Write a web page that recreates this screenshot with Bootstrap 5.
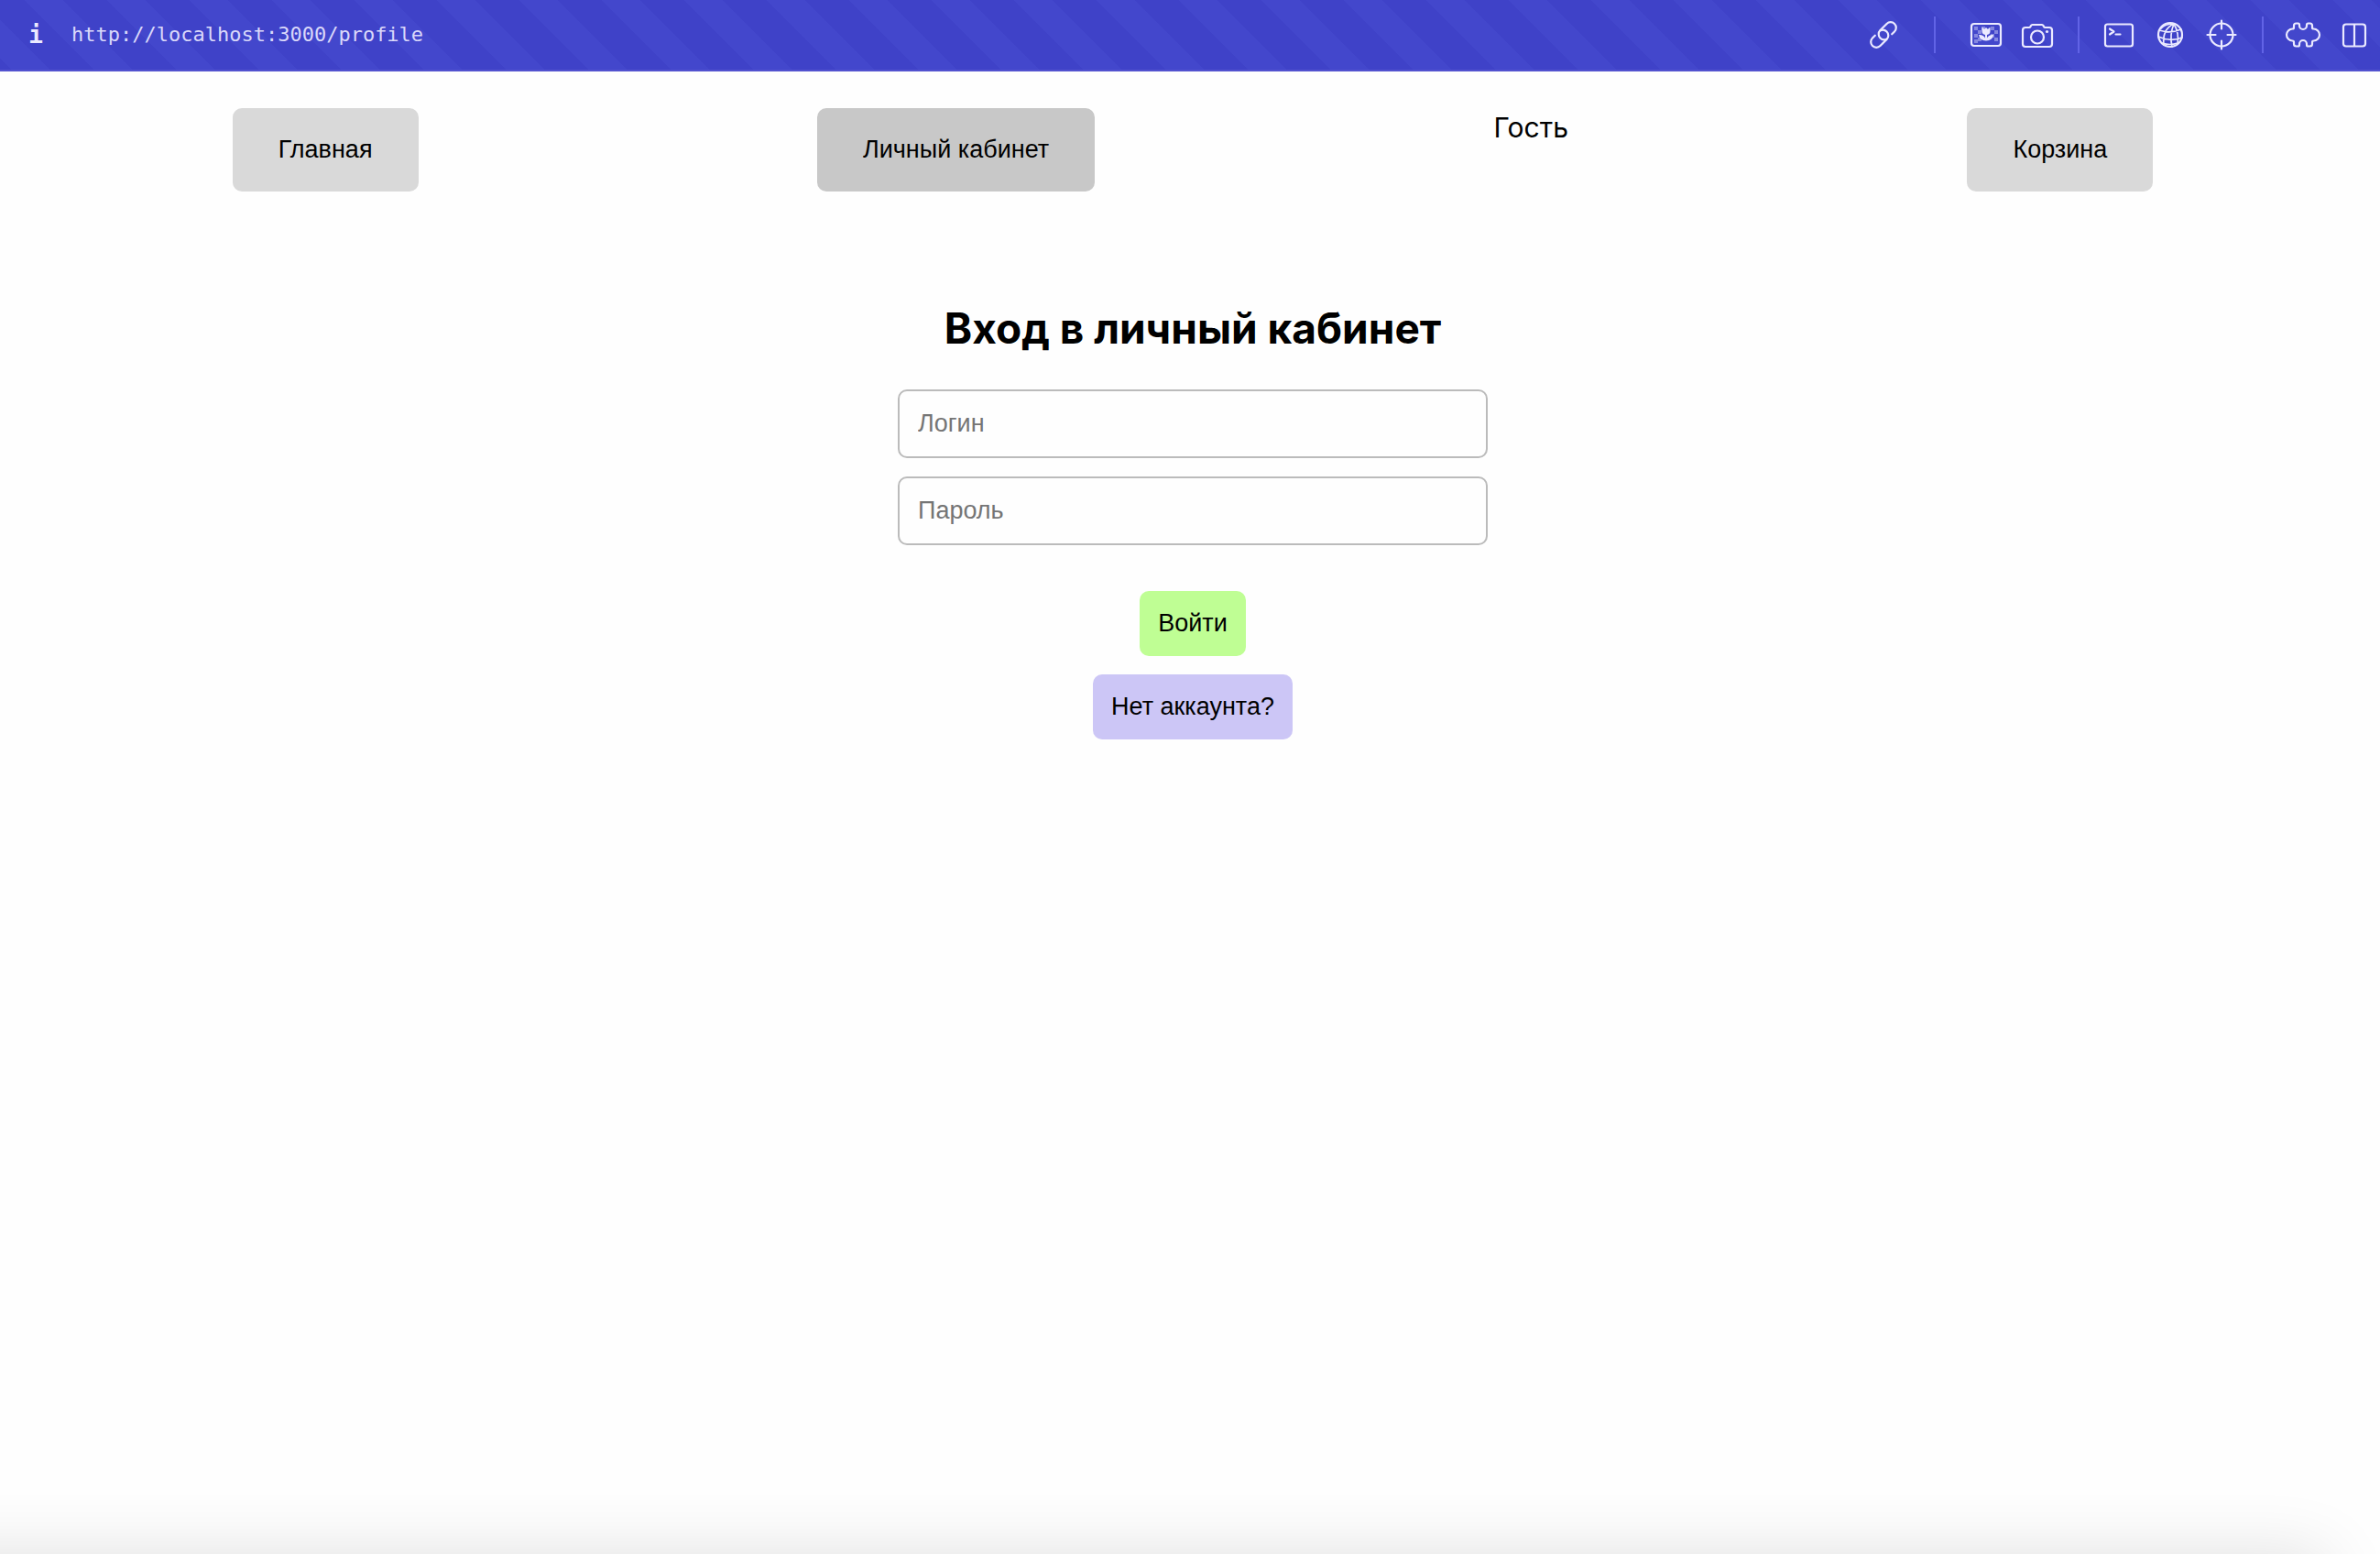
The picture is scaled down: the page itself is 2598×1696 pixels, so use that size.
<!DOCTYPE html>
<html lang="ru">
<head>
<meta charset="utf-8">
<meta name="viewport" content="width=device-width, initial-scale=1">
<title>Личный кабинет</title>
<link href="https://cdn.jsdelivr.net/npm/bootstrap@5.3.0/dist/css/bootstrap.min.css" rel="stylesheet">
<style>
  body { background: #fefefe; color: #000; font-family: Inter, "Liberation Sans", sans-serif; font-size: 30px; line-height: 38px; }
  .page-shell { overflow: hidden; }
  .dev-bar {
    height: 78px; border-bottom: 2px solid #5252cf; background-color: #3f42c8;
    background-image: linear-gradient(45deg, transparent 15%, #4347cc 15%, #4347cc 38%, transparent 38%, transparent 65%, #4347cc 65%, #4347cc 88%, transparent 88%);
    background-size: 90px 90px; background-origin: border-box;
    color: #ebeaff; font-family: "DejaVu Sans Mono", monospace; font-size: 22px;
  }
  .info-btn { width: 78px; font-weight: 700; font-size: 26px; font-family: "DejaVu Sans Mono", monospace; color: inherit; background: none; border: 0; padding: 0; }
  .url-link { color: #dad8fa; text-decoration: none; }
  .tool-btn { width: 56px; height: 56px; padding: 0; border: 0; background: none; color: inherit; display: flex; align-items: center; justify-content: center; }
  .tool-btn svg { width: 40px; height: 40px; fill: none; stroke: currentColor; stroke-width: 2.2; stroke-linecap: round; stroke-linejoin: round; }
  .tool-rule { width: 2px; height: 40px; background: #6163e6; margin: 0 15px 0 16px; }
  .tool-rule-wide { margin: 0 27px; }
  .site-area { padding: 40px 30px 0 36px; }
  .site-btn { border: 0; border-radius: 10px; color: #000; font-family: "Liberation Sans", Arial, sans-serif; font-size: 27px; line-height: 31px; padding: 20px; }
  .menu-btn { background: #d9d9d9; padding: 30px 50px; }
  .menu-btn.current { background: #c8c8c8; }
  .enter-btn { background: #bffe94; }
  .signup-btn { background: #ccc6f6; }
  .guest-name { padding-top: 2px; }
  .login-form { margin-top: 120px; }
  .login-title { font-size: 46px; line-height: 58px; font-weight: 700; margin: 0 0 38px; }
  .fields { width: 644px; max-width: 100%; gap: 20px; margin-bottom: 50px; }
  .fields input { border: 2px solid #bbb; border-radius: 10px; background: transparent; padding: 20px; height: 75px; font-family: "Liberation Sans", Arial, sans-serif; font-size: 27px; line-height: 31px; color: #000; }
  .fields input::placeholder { color: #757575; }
  .actions { gap: 20px; }
  .bottom-shade { height: 100px; margin: auto 58px -100px -100px; box-shadow: 0 0 72px rgba(0,0,0,.12); }
</style>
<script src="https://cdn.jsdelivr.net/npm/bootstrap@5.3.0/dist/js/bootstrap.bundle.min.js"></script>
</head>
<body>
<div class="page-shell d-flex flex-column min-vh-100">
  <header class="dev-bar d-flex align-items-center">
    <button class="info-btn" type="button" aria-label="Info">i</button>
    <a class="url-link" href="http://localhost:3000/profile">http://localhost:3000/profile</a>
    <div class="d-flex align-items-center ms-auto">
      <button class="tool-btn" type="button" aria-label="Link"><svg viewBox="-20 -20 40 40"><g transform="rotate(-45)"><path d="M7 6h4a6 6 0 0 0 0-12H1a6 6 0 0 0-6 6 6 6 0 0 0 4 5.700"/><path d="M-7-6h-4a6 6 0 0 0 0 12H-1a6 6 0 0 0 6-6 6 6 0 0 0-4-5.700"/></g></svg></button>
      <div class="tool-rule tool-rule-wide"></div>
      <button class="tool-btn" type="button" aria-label="Image"><svg viewBox="-20 -20 40 40"><g fill="currentColor" stroke="none"><path opacity=".4" d="M-13-9h4v4h-4zM-5-9h4v4h-4zM5-9h4v4h-4zM-9-5h4v4h-4zM9-5h4v4h-4zM-13-1h4v4h-4zM5-1h4v4h-4zM-9 3h4v4h-4zM9 3h4v4h-4zM-13 5h4v4h-4z"/><path d="M-4.500-8q1.500 0 2.500 2l2-2 2 2q1-2 2.500-2v4q0 3.500-3.500 4v3.500q2-4 7-3.500-1 6-8 6.500-7-.5-8-6.500 5-.5 7 3.500V0q-3.500-.5-3.500-4z"/></g><rect x="-16" y="-12" width="32" height="24" rx="3"/></svg></button>
      <button class="tool-btn" type="button" aria-label="Screenshot"><svg viewBox="-20 -20 40 40"><path d="M-13-8h4q1 0 1.500-1l.5-1q.5-1 1.500-1H5q1 0 1.500 1L7-9q.5 1 1.500 1H13q3 0 3 3V10q0 3-3 3h-26q-3 0-3-3V-5q0-3 3-3z"/><circle cx="0" cy="2.500" r="7"/><circle cx="10.500" cy="-3.500" r="1.600" fill="currentColor" stroke="none"/></svg></button>
      <div class="tool-rule"></div>
      <button class="tool-btn" type="button" aria-label="Console"><svg viewBox="-20 -20 40 40"><rect x="-15" y="-11.500" width="30" height="24" rx="2.500"/><path d="M-10-6.500l4.500 3-4.500 3M-3.500-.5h5"/></svg></button>
      <button class="tool-btn" type="button" aria-label="Network"><svg viewBox="-20 -20 40 40"><circle r="13"/><g stroke-width="1.700"><path d="M4-12Q-9-6-7 11M4-12Q-1 0 2 13M4-12Q10-2 8 10M4-12Q-6-12-10-7M-12-5Q0-1 12-6M-13 2Q0 8 13 3M-9 9Q0 12 8 9"/></g></svg></button>
      <button class="tool-btn" type="button" aria-label="Inspect"><svg viewBox="-20 -20 40 40"><circle r="12.500"/><path d="M0-15.500v9M0 6.500v9M-15.500 0h9M6.500 0h9"/></svg></button>
      <div class="tool-rule"></div>
      <button class="tool-btn" type="button" aria-label="Extensions"><svg viewBox="-20 -20 40 40"><path d="M-7.500-12.500h2q1.500 0 1.500 1.500v1a4 4 0 0 0 8 0v-1q0-1.500 1.500-1.500h2q2.500 0 2.500 2.500v2q0 1.500 1.500 1.500a6.500 6.500 0 0 1 0 13Q10 6.500 10 8v2q0 2.500-2.500 2.500h-2Q4 12.500 4 11v-1a4 4 0 0 0-8 0v1q0 1.500-1.500 1.500h-2q-2.500 0-2.500-2.500V8q0-1.500-1.500-1.500a6.500 6.500 0 0 1 0-13q1.500 0 1.500-1.500v-2q0-2.500 2.500-2.500z"/></svg></button>
      <button class="tool-btn" type="button" aria-label="Panels"><svg viewBox="-20 -20 40 40"><rect x="-12" y="-11.500" width="24" height="24" rx="3"/><path d="M0-11v23"/></svg></button>
    </div>
  </header>
  <div class="site-area">
    <nav class="d-flex justify-content-around align-items-start">
      <button class="site-btn menu-btn" type="button">Главная</button>
      <button class="site-btn menu-btn current" type="button">Личный кабинет</button>
      <div class="guest-name">Гость</div>
      <button class="site-btn menu-btn" type="button">Корзина</button>
    </nav>
    <form class="login-form d-flex flex-column align-items-center">
      <h1 class="login-title">Вход в личный кабинет</h1>
      <div class="fields d-flex flex-column">
        <input type="text" placeholder="Логин" aria-label="Логин">
        <input type="password" placeholder="Пароль" aria-label="Пароль">
      </div>
      <div class="actions d-flex flex-column align-items-center">
        <button class="site-btn enter-btn" type="button">Войти</button>
        <button class="site-btn signup-btn" type="button">Нет аккаунта?</button>
      </div>
    </form>
  </div>
  <div class="bottom-shade"></div>
</div>
</body>
</html>
